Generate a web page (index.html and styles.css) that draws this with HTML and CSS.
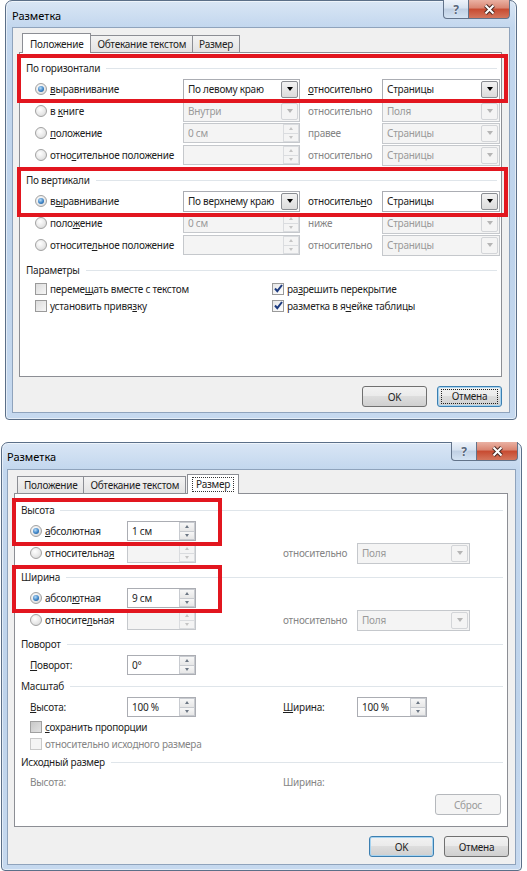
FILE: index.html
```html
<!DOCTYPE html>
<html lang="ru">
<head>
    <meta charset="UTF-8">
    <meta name="viewport" content="width=device-width, initial-scale=1.0">
    <title>Разметка</title>
    <link rel="stylesheet" href="styles.css">
</head>
<body>

    <!-- окно 1: вкладка "Положение" -->
    <div class="window w1">
        <div class="titlebar">
            <span class="title">Разметка</span>
            <div class="caps">
                <span class="cap cap-help">?</span>
                <span class="cap cap-close">
                    <svg width="13" height="11" viewBox="0 0 13 11"><path d="M2.5 1.5l8 8M10.5 1.5l-8 8" stroke="#4a2a24" stroke-width="4"/><path d="M2.5 1.5l8 8M10.5 1.5l-8 8" stroke="#fff" stroke-width="2"/></svg>
                </span>
            </div>
        </div>
        <div class="client">
            <div class="tabs">
                <span class="tab active">Положение</span>
                <span class="tab">Обтекание текстом</span>
                <span class="tab">Размер</span>
            </div>
            <div class="panel">
                <div class="group">
                    <div class="marked">
                        <div class="group-head">По горизонтали</div>
                        <div class="row">
                            <label class="opt"><span class="radio on"></span><span><u>в</u>ыравнивание</span></label>
                            <div class="combo"><span class="val">По левому краю</span><b class="drop"></b></div>
                            <span class="rel"><u>о</u>тносительно</span>
                            <div class="combo"><span class="val">Страницы</span><b class="drop"></b></div>
                        </div>
                    </div>
                    <div class="row">
                        <label class="opt"><span class="radio"></span><span>в <u>к</u>ниге</span></label>
                        <div class="combo off"><span class="val">Внутри</span><b class="drop"></b></div>
                        <span class="rel dim">относительно</span>
                        <div class="combo off"><span class="val">Поля</span><b class="drop"></b></div>
                    </div>
                    <div class="row">
                        <label class="opt"><span class="radio"></span><span><u>п</u>оложение</span></label>
                        <div class="spin off"><span class="val">0 см</span><b class="arrows"><i class="up"></i><i class="down"></i></b></div>
                        <span class="rel dim">правее</span>
                        <div class="combo off"><span class="val">Страницы</span><b class="drop"></b></div>
                    </div>
                    <div class="row">
                        <label class="opt"><span class="radio"></span><span>отно<u>с</u>ительное положение</span></label>
                        <div class="spin off"><span class="val"></span><b class="arrows"><i class="up"></i><i class="down"></i></b></div>
                        <span class="rel dim">относительно</span>
                        <div class="combo off"><span class="val">Страницы</span><b class="drop"></b></div>
                    </div>
                </div>

                <div class="group">
                    <div class="marked">
                        <div class="group-head">По вертикали</div>
                        <div class="row">
                            <label class="opt"><span class="radio on"></span><span>в<u>ы</u>равнивание</span></label>
                            <div class="combo"><span class="val">По верхнему краю</span><b class="drop"></b></div>
                            <span class="rel">относитель<u>н</u>о</span>
                            <div class="combo"><span class="val">Страницы</span><b class="drop"></b></div>
                        </div>
                    </div>
                    <div class="row">
                        <label class="opt"><span class="radio"></span><span>поло<u>ж</u>ение</span></label>
                        <div class="spin off"><span class="val">0 см</span><b class="arrows"><i class="up"></i><i class="down"></i></b></div>
                        <span class="rel dim">ниже</span>
                        <div class="combo off"><span class="val">Страницы</span><b class="drop"></b></div>
                    </div>
                    <div class="row">
                        <label class="opt"><span class="radio"></span><span>относите<u>л</u>ьное положение</span></label>
                        <div class="spin off"><span class="val"></span><b class="arrows"><i class="up"></i><i class="down"></i></b></div>
                        <span class="rel dim">относительно</span>
                        <div class="combo off"><span class="val">Страницы</span><b class="drop"></b></div>
                    </div>
                </div>

                <div class="group">
                    <div class="group-head">Параметры</div>
                    <div class="checks">
                        <label class="chk"><span class="box"></span><span>переме<u>щ</u>ать вместе с текстом</span></label>
                        <label class="chk"><span class="box on"><svg width="9" height="9" viewBox="0 0 9 9"><path d="M1 4.5l2.3 2.7L8 1" fill="none" stroke="#1d3b80" stroke-width="2"/></svg></span><span>ра<u>з</u>решить перекрытие</span></label>
                        <label class="chk"><span class="box"></span><span>установить привя<u>з</u>ку</span></label>
                        <label class="chk"><span class="box on"><svg width="9" height="9" viewBox="0 0 9 9"><path d="M1 4.5l2.3 2.7L8 1" fill="none" stroke="#1d3b80" stroke-width="2"/></svg></span><span>разметка в я<u>ч</u>ейке таблицы</span></label>
                    </div>
                </div>
            </div>
            <div class="actions">
                <button class="btn">OK</button>
                <button class="btn focused"><span>Отмена</span></button>
            </div>
        </div>
    </div>

    <!-- окно 2: вкладка "Размер" -->
    <div class="window w2">
        <div class="titlebar">
            <span class="title">Разметка</span>
            <div class="caps">
                <span class="cap cap-help">?</span>
                <span class="cap cap-close">
                    <svg width="13" height="11" viewBox="0 0 13 11"><path d="M2.5 1.5l8 8M10.5 1.5l-8 8" stroke="#4a2a24" stroke-width="4"/><path d="M2.5 1.5l8 8M10.5 1.5l-8 8" stroke="#fff" stroke-width="2"/></svg>
                </span>
            </div>
        </div>
        <div class="client">
            <div class="tabs">
                <span class="tab">Положение</span>
                <span class="tab">Обтекание текстом</span>
                <span class="tab active"><span class="focus-rect">Размер</span></span>
            </div>
            <div class="panel">
                <div class="group marked">
                    <div class="group-head">Высота</div>
                    <div class="row">
                        <label class="opt"><span class="radio on"></span><span><u>а</u>бсолютная</span></label>
                        <div class="spin"><span class="val">1 см</span><b class="arrows"><i class="up"></i><i class="down"></i></b></div>
                    </div>
                </div>
                <div class="row">
                    <label class="opt"><span class="radio"></span><span>относительна<u>я</u></span></label>
                    <div class="spin off"><span class="val"></span><b class="arrows"><i class="up"></i><i class="down"></i></b></div>
                    <span class="rel dim">относительно</span>
                    <div class="combo off"><span class="val">Поля</span><b class="drop"></b></div>
                </div>

                <div class="group marked">
                    <div class="group-head">Ширина</div>
                    <div class="row">
                        <label class="opt"><span class="radio on"></span><span>абсол<u>ю</u>тная</span></label>
                        <div class="spin"><span class="val">9 см</span><b class="arrows"><i class="up"></i><i class="down"></i></b></div>
                    </div>
                </div>
                <div class="row">
                    <label class="opt"><span class="radio"></span><span>относите<u>л</u>ьная</span></label>
                    <div class="spin off"><span class="val"></span><b class="arrows"><i class="up"></i><i class="down"></i></b></div>
                    <span class="rel dim">относительно</span>
                    <div class="combo off"><span class="val">Поля</span><b class="drop"></b></div>
                </div>

                <div class="group">
                    <div class="group-head">Поворот</div>
                    <div class="row">
                        <label class="opt"><span><u>П</u>оворот:</span></label>
                        <div class="spin"><span class="val">0°</span><b class="arrows"><i class="up"></i><i class="down"></i></b></div>
                    </div>
                </div>

                <div class="group">
                    <div class="group-head">Масштаб</div>
                    <div class="row">
                        <label class="opt"><span><u>В</u>ысота:</span></label>
                        <div class="spin"><span class="val">100 %</span><b class="arrows"><i class="up"></i><i class="down"></i></b></div>
                        <span class="rel"><u>Ш</u>ирина:</span>
                        <div class="spin short"><span class="val">100 %</span><b class="arrows"><i class="up"></i><i class="down"></i></b></div>
                    </div>
                    <div class="checks single">
                        <label class="chk"><span class="box mixed"></span><span><u>с</u>охранить пропорции</span></label>
                        <label class="chk dim"><span class="box off"></span><span>относительно исходного размера</span></label>
                    </div>
                </div>

                <div class="group">
                    <div class="group-head">Исходный размер</div>
                    <div class="row slim">
                        <span class="opt dim">Высота:</span>
                        <span></span>
                        <span class="rel dim">Ширина:</span>
                    </div>
                    <div class="reset-row">
                        <button class="btn off">Сброс</button>
                    </div>
                </div>
            </div>
            <div class="actions">
                <button class="btn default">OK</button>
                <button class="btn">Отмена</button>
            </div>
        </div>
    </div>

</body>
</html>
```

FILE: styles.css
```css
body {
    margin: 0;
    background: #fff;
    font-family: "Noto Sans", "Liberation Sans", sans-serif;
    font-size: 10px;
    letter-spacing: -0.25px;
    color: #1e1e1e;
}
u {
    text-decoration: underline;
    text-underline-offset: 1px;
}
.dim {
    color: #858585;
}

/* рамка окна */
.window {
    box-sizing: border-box;
    border: 1px solid #5b6f88;
    border-radius: 7px 7px 4px 4px;
    background: linear-gradient(180deg, #d9e6f5 0, #c3d7ee 26px, #bed3eb 60%, #c6d9ef 100%);
    box-shadow: inset 0 0 0 1px rgba(255, 255, 255, 0.55);
    display: flex;
    flex-direction: column;
}
.w1 {
    margin-left: 5px;
    width: 512px;
    height: 420px;
    padding: 0 6px 6px;
}
.w2 {
    margin: 22px 0 0 1px;
    width: 521px;
    height: 429px;
    padding: 0 5px 5px;
}
.titlebar {
    height: 26px;
    display: flex;
    align-items: flex-start;
}
.title {
    font-size: 11px;
    letter-spacing: 0;
    color: #000;
    padding-top: 7px;
}
.w2 .title {
    padding-top: 6px;
}
.caps {
    margin-left: auto;
    display: flex;
    margin-top: -1px;
}
.w2 .caps {
    margin-right: -2px;
}
.cap {
    box-sizing: border-box;
    height: 19px;
    border: 1px solid #62738a;
    border-top: none;
    display: flex;
    align-items: center;
    justify-content: center;
}
.cap-help {
    width: 26px;
    border-radius: 0 0 0 4px;
    background: linear-gradient(180deg, #eef3fa 0, #d6e2f0 45%, #bfcfe3 50%, #d4e3f3 100%);
    color: #56657a;
    font-weight: bold;
    font-size: 12px;
    text-shadow: 0 0 2px #fff;
}
.cap-close {
    width: 41px;
    border-left: none;
    border-radius: 0 0 4px 0;
    background: linear-gradient(180deg, #eab1a3 0, #d98571 45%, #c74a30 50%, #d4765d 100%);
}

/* клиентская область */
.client {
    flex: 1;
    border: 1px solid #8fa3bc;
    background: #f0f0f0;
    display: flex;
    flex-direction: column;
}
.w1 .client {
    padding: 5px 7px 0 6px;
}
.w2 .client {
    padding: 4px 7px 0 6px;
}

.tabs {
    display: flex;
    align-items: flex-end;
    height: 19px;
    padding-left: 3px;
}
.w1 .tabs {
    padding-left: 5px;
}
.tab {
    box-sizing: border-box;
    height: 17px;
    padding: 0 6px;
    border: 1px solid #8c8e94;
    border-bottom: none;
    margin-right: -1px;
    background: linear-gradient(180deg, #f3f3f3, #e3e3e3);
    display: flex;
    align-items: center;
    position: relative;
}
.tab.active {
    height: 20px;
    margin: 0 -1px -1px -2px;
    padding: 0 7px;
    background: #fff;
    z-index: 1;
}
.w2 .tab.active {
    margin-left: 2px;
    padding: 0 4px;
}
.focus-rect {
    border: 1px dotted #333;
    padding: 0 3px;
    line-height: 13px;
}

.panel {
    box-sizing: border-box;
    background: #fff;
    border: 1px solid #8c8e94;
}
.w1 .panel {
    height: 325px;
    padding: 5px 4px 0 6px;
}
.w2 .panel {
    height: 334px;
    padding: 6px 4px 0 6px;
}

/* группы с заголовком и линией */
.group {
    position: relative;
}
.w1 .group + .group {
    margin-top: 4px;
}
.w2 .panel > .row + .group {
    margin-top: 3px;
}
.group-head {
    height: 20px;
    display: flex;
    align-items: center;
    gap: 6px;
    color: #1e1e1e;
}
.group-head::after {
    content: "";
    flex: 1;
    height: 1px;
    background: #dfe5ea;
}
.marked {
    position: relative;
}
.marked::after {
    content: "";
    position: absolute;
    border: 4px solid #e2161f;
    pointer-events: none;
}
.w1 .marked::after {
    top: -4px;
    bottom: -3px;
    left: -9px;
    right: -11px;
}
.w1 .group + .group .marked::after {
    top: -3px;
    bottom: -5px;
}
.w2 .marked::after {
    top: -2px;
    bottom: -4px;
    left: -9px;
    width: 202px;
}

.row {
    display: grid;
    height: 22px;
    align-items: center;
    padding-left: 9px;
}
.w1 .row {
    grid-template-columns: 148px 117px 82px 118px;
}
.w2 .row {
    grid-template-columns: 97px 69px 161px 113px;
}
.row.slim {
    height: 20px;
}
.opt {
    display: flex;
    align-items: center;
    white-space: nowrap;
}
.rel {
    white-space: nowrap;
}
.w1 .rel {
    padding-left: 8px;
}
.w2 .rel {
    padding-left: 87px;
}

/* радиокнопки и флажки */
.radio {
    box-sizing: border-box;
    width: 12px;
    height: 12px;
    margin-right: 3px;
    border-radius: 50%;
    border: 1px solid #a2a2a2;
    background: radial-gradient(circle at 40% 35%, #fff 0, #e8e8e8 55%, #cfcfcf 100%);
    display: flex;
    align-items: center;
    justify-content: center;
}
.radio.on::after {
    content: "";
    width: 6px;
    height: 6px;
    border-radius: 50%;
    background: radial-gradient(circle at 40% 35%, #b8dcf7 0, #3c83c6 55%, #1c4f86 100%);
}
.checks {
    display: grid;
    padding-left: 9px;
}
.w1 .checks {
    grid-template-columns: 237px 1fr;
}
.chk {
    height: 17px;
    display: flex;
    align-items: center;
    white-space: nowrap;
}
.box {
    box-sizing: border-box;
    width: 12px;
    height: 12px;
    margin-right: 3px;
    border: 1px solid #9a9a9a;
    background: linear-gradient(135deg, #dcdcdc, #f6f6f6);
    display: flex;
    align-items: center;
    justify-content: center;
}
.box.on {
    background: linear-gradient(135deg, #e6e6e6, #fff);
}
.box.mixed {
    background: linear-gradient(135deg, #c8c8c8, #e2e2e2);
    border-color: #a0a0a0;
}
.box.off {
    border-color: #c9c9c9;
    background: #f4f4f4;
}

/* поля ввода */
.combo,
.spin {
    box-sizing: border-box;
    height: 21px;
    border: 1px solid #abadb3;
    background: #fff;
    display: flex;
    align-items: stretch;
}
.spin {
    height: 20px;
}
.spin.short {
    width: 70px;
}
.val {
    flex: 1;
    padding-left: 4px;
    display: flex;
    align-items: center;
    white-space: nowrap;
    overflow: hidden;
}
.combo.off,
.spin.off {
    border-color: #c5c8cc;
    background: #f4f4f4;
    color: #9a9a9a;
}
.drop {
    width: 15px;
    margin: 1px;
    border: 1px solid #8a8d92;
    border-radius: 2px;
    background: linear-gradient(180deg, #f2f2f2, #dcdcdc);
    display: flex;
    align-items: center;
    justify-content: center;
}
.drop::after {
    content: "";
    border-left: 3.5px solid transparent;
    border-right: 3.5px solid transparent;
    border-top: 4px solid #000;
}
.off .drop {
    border-color: #d3d5d8;
    background: #f4f4f4;
}
.off .drop::after {
    border-top-color: #b5b5b5;
}
.arrows {
    width: 15px;
    display: flex;
    flex-direction: column;
    border-left: 1px solid #d4d6da;
}
.arrows i {
    flex: 1;
    display: flex;
    align-items: center;
    justify-content: center;
    border: 1px solid #c8cbd0;
    margin: 0 0 0 -1px;
    background: linear-gradient(180deg, #f7f7f7, #e7e7e7);
}
.arrows i.down {
    border-top: none;
}
.arrows i.up::after {
    content: "";
    border-left: 2.5px solid transparent;
    border-right: 2.5px solid transparent;
    border-bottom: 3px solid #6c7784;
}
.arrows i.down::after {
    content: "";
    border-left: 2.5px solid transparent;
    border-right: 2.5px solid transparent;
    border-top: 3px solid #6c7784;
}
.off .arrows i::after {
    border-top-color: #c4c4c4;
    border-bottom-color: #c4c4c4;
}
.off .arrows i {
    background: #f4f4f4;
    border-color: #dadcdf;
}

/* кнопки */
.btn {
    box-sizing: border-box;
    width: 65px;
    height: 21px;
    padding: 0;
    border: 1px solid #707070;
    border-radius: 3px;
    background: linear-gradient(180deg, #f2f2f2 0, #ebebeb 45%, #dddddd 50%, #cfcfcf 100%);
    font-family: inherit;
    font-size: 10px;
    letter-spacing: -0.25px;
    color: #1e1e1e;
    display: flex;
    align-items: center;
    justify-content: center;
}
.btn.default,
.btn.focused {
    border-color: #3c7fb1;
    box-shadow: inset 0 0 0 1px #a6d3f0;
}
.btn.focused span {
    border: 1px dotted #222;
    width: 55px;
    height: 13px;
    line-height: 13px;
}
.btn.off {
    width: 66px;
    border-color: #b5b8bc;
    background: #f4f4f4;
    color: #9b9b9b;
}
.actions {
    display: flex;
    justify-content: flex-end;
    gap: 10px;
}
.w1 .actions {
    margin-top: 9px;
}
.w2 .actions {
    margin-top: 9px;
    margin-right: -1px;
}
.reset-row {
    display: flex;
    justify-content: flex-end;
    margin-top: 2px;
    padding-right: 2px;
}
```
